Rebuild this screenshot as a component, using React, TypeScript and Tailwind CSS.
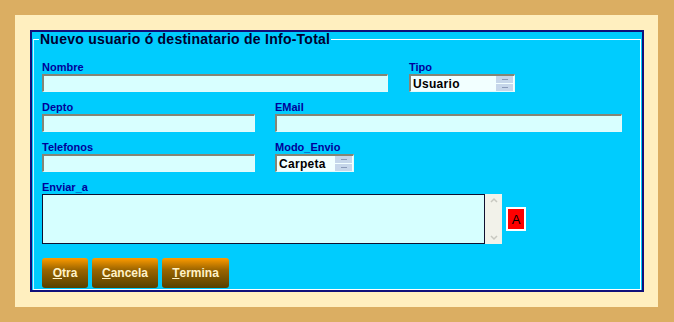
import React from "react";

const font = { fontFamily: '"Liberation Sans", Arial, sans-serif' };

function Label({ children }: { children: React.ReactNode }) {
  return <div className="h-[14px] text-[11px] leading-[14px] font-bold text-[#000099]">{children}</div>;
}

function Field({ w }: { w: string }) {
  return <div className={`${w} h-[18px] bg-[#d8ffff] border-t-2 border-l-2 border-[#858575] border-b border-r border-b-[#e6fafa] border-r-[#e6fafa]`} />;
}

function Spinner() {
  return (
    <div className="ml-auto mr-[1px] flex flex-col gap-[1px]">
      <div className="w-[17px] h-[7px] bg-[#c6d6ea] flex items-center justify-center">
        <div className="w-[6px] h-px bg-[#8a9ab8]" />
      </div>
      <div className="w-[17px] h-[7px] bg-[#c6d6ea] flex items-center justify-center">
        <div className="w-[6px] h-px bg-[#8a9ab8]" />
      </div>
    </div>
  );
}

function Combo({ w, value }: { w: string; value: string }) {
  return (
    <div className={`${w} h-[18px] bg-[#f2ffff] border-t-2 border-l-2 border-[#858575] border-b border-r border-b-[#e6fafa] border-r-[#e6fafa] flex items-center pl-[2px]`}>
      <span className="text-[12px] font-bold text-black leading-none tracking-[0.3px]">{value}</span>
      <Spinner />
    </div>
  );
}

function Btn({ first, rest, w }: { first: string; rest: string; w: string }) {
  return (
    <button className={`${w} h-[30px] rounded-[3px] bg-gradient-to-b from-[#ff9c00] via-[#9a6400] via-40% to-[#574000] text-[12px] font-bold text-[#fff2c8] flex items-center justify-center`}>
      <span className="underline">{first}</span>
      {rest}
    </button>
  );
}

export default function App() {
  return (
    <div className="w-[674px] h-[322px] bg-[#dbae62] pl-[15px] pr-[16px] pt-[15px] pb-[15px]" style={font}>
      <div className="h-full bg-[#ffefbf] pl-[15px] pr-[14px] pt-[15px] pb-[15px]">
        <div className="h-[262px] border-2 border-[#10107a] bg-[#00ccfe] pl-[1px] pr-[1px]">
          <fieldset className="h-[258px] mt-0 border border-white border-l-[#c8f2ff] pl-[8px] pr-0 pt-[13px]">
            <legend className="-ml-[3px] px-[1px] text-[14px] leading-[15px] font-bold text-[#000030] tracking-[0.25px]">
              Nuevo usuario ó destinatario de Info-Total
            </legend>
            <div className="flex">
              <div className="w-[346px]">
                <Label>Nombre</Label>
                <Field w="w-[346px]" />
              </div>
              <div className="ml-[21px]">
                <Label>Tipo</Label>
                <Combo w="w-[106px]" value="Usuario" />
              </div>
            </div>
            <div className="flex mt-[8px]">
              <div>
                <Label>Depto</Label>
                <Field w="w-[213px]" />
              </div>
              <div className="ml-[20px]">
                <Label>EMail</Label>
                <Field w="w-[347px]" />
              </div>
            </div>
            <div className="flex mt-[8px]">
              <div>
                <Label>Telefonos</Label>
                <Field w="w-[213px]" />
              </div>
              <div className="ml-[20px]">
                <Label>Modo_Envio</Label>
                <Combo w="w-[79px]" value="Carpeta" />
              </div>
            </div>
            <div className="mt-[8px]">
              <Label>Enviar_a</Label>
              <div className="flex items-center">
                <div className="w-[443px] h-[50px] bg-[#d6ffff] border border-[#101030]" />
                <div className="w-[17px] h-[50px] bg-[#f2f2ea] flex flex-col justify-between items-center py-[2px]">
                  <svg width="10" height="8" viewBox="0 0 10 8"><path d="M2 6 L5 3 L8 6" stroke="#c8c8c0" strokeWidth="1.5" fill="none" /></svg>
                  <svg width="10" height="8" viewBox="0 0 10 8"><path d="M2 2 L5 5 L8 2" stroke="#c8c8c0" strokeWidth="1.5" fill="none" /></svg>
                </div>
                <div className="ml-[4px] w-[20px] h-[24px] bg-[#ff0000] border-2 border-white flex items-center justify-center text-[13px] leading-none text-black">
                  A
                </div>
              </div>
            </div>
            <div className="flex gap-[4px] mt-[14px]">
              <Btn w="w-[46px]" first="O" rest="tra" />
              <Btn w="w-[66px]" first="C" rest="ancela" />
              <Btn w="w-[67px]" first="T" rest="ermina" />
            </div>
          </fieldset>
        </div>
      </div>
    </div>
  );
}
